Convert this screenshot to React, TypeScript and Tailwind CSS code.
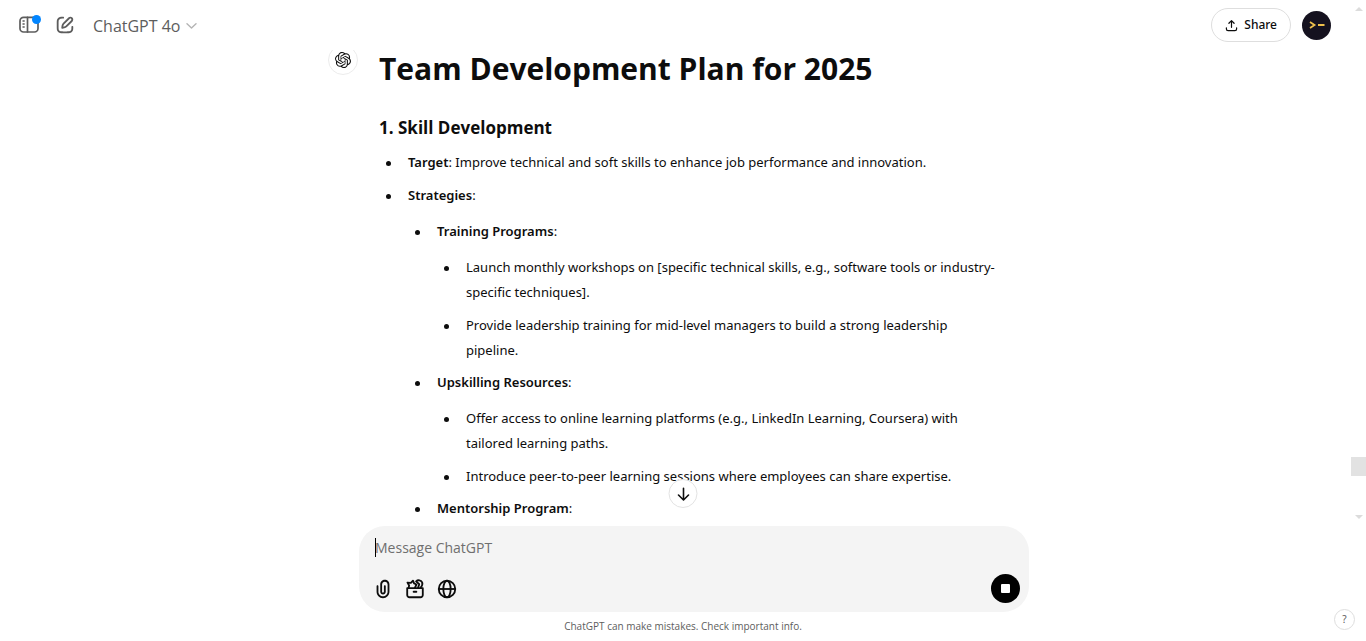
import React from "react";

type Item = { text?: string; bold?: string; tail?: string; children?: Item[] };

const plan: Item[] = [
  { bold: "Target", tail: ": Improve technical and soft skills to enhance job performance and innovation." },
  {
    bold: "Strategies",
    tail: ":",
    children: [
      {
        bold: "Training Programs",
        tail: ":",
        children: [
          { text: "Launch monthly workshops on [specific technical skills, e.g., software tools or industry-specific techniques]." },
          { text: "Provide leadership training for mid-level managers to build a strong leadership pipeline." },
        ],
      },
      {
        bold: "Upskilling Resources",
        tail: ":",
        children: [
          { text: "Offer access to online learning platforms (e.g., LinkedIn Learning, Coursera) with tailored learning paths." },
          { text: "Introduce peer-to-peer learning sessions where employees can share expertise." },
        ],
      },
      { bold: "Mentorship Program", tail: ":" },
    ],
  },
];

const listStyles = [
  "mt-2 flex flex-col gap-2",
  "mt-[11px] flex flex-col gap-[7px]",
  "mt-[11px] flex flex-col gap-2",
];

function Bullets({ items, depth = 0 }: { items: Item[]; depth?: number }) {
  return (
    <ul className={listStyles[depth]}>
      {items.map((item, i) => (
        <li key={i} className="relative pl-[29px] before:absolute before:left-[7px] before:top-[11px] before:size-[5px] before:rounded-full before:bg-[#0d0d0d]">
          <p>
            {item.bold && <strong className="font-semibold">{item.bold}</strong>}
            {item.tail}
            {item.text}
          </p>
          {item.children && <Bullets items={item.children} depth={depth + 1} />}
        </li>
      ))}
    </ul>
  );
}

function SidebarIcon() {
  return (
    <svg className="h-5 w-[22px]" viewBox="0 0 22 20" fill="none" stroke="currentColor" strokeWidth="1.7" strokeLinecap="round">
      <rect x="2" y="2.4" width="18" height="14.6" rx="3.6" />
      <path d="M9.500 2.400v14.600" />
      <path d="M5 6h1.200M5 9h1.200M5 12h1.200" strokeWidth="1.400" />
    </svg>
  );
}

function EditIcon() {
  return (
    <svg className="size-[22px]" viewBox="0 0 24 24" fill="currentColor" fillRule="evenodd">
      <path d="M15.6729 3.91287C16.8918 2.69392 18.8682 2.69392 20.0871 3.91287C21.3061 5.13182 21.3061 7.10813 20.0871 8.32708L14.1499 14.2643C13.3849 15.0293 12.3925 15.5255 11.3215 15.6785L9.14142 15.9899C8.82983 16.0344 8.51546 15.9297 8.29289 15.7071C8.07033 15.4845 7.96554 15.1701 8.01005 14.8586L8.32149 12.6785C8.47449 11.6075 8.97072 10.615 9.7357 9.85006L15.6729 3.91287ZM18.6729 5.32708C18.235 4.88918 17.525 4.88918 17.0871 5.32708L11.1499 11.2643C10.6909 11.7233 10.3932 12.3187 10.3014 12.9613L10.1785 13.8215L11.0386 13.6986C11.6812 13.6068 12.2767 13.3091 12.7357 12.8501L18.6729 6.91287C19.1108 6.47497 19.1108 5.76499 18.6729 5.32708ZM11 3.99929C11.0004 4.55157 10.5531 4.99963 10.0008 5.00007C9.00227 5.00084 8.29769 5.00827 7.74651 5.06064C7.20685 5.11191 6.88488 5.20117 6.63803 5.32695C6.07354 5.61457 5.6146 6.07351 5.32698 6.63799C5.19279 6.90135 5.10062 7.24904 5.05118 7.8542C5.00078 8.47105 5 9.26336 5 10.4V13.6C5 14.7366 5.00078 15.5289 5.05118 16.1457C5.10062 16.7509 5.19279 17.0986 5.32698 17.3619C5.6146 17.9264 6.07354 18.3854 6.63803 18.673C6.90138 18.8072 7.24907 18.8993 7.85424 18.9488C8.47108 18.9992 9.26339 19 10.4 19H13.6C14.7366 19 15.5289 18.9992 16.1458 18.9488C16.7509 18.8993 17.0986 18.8072 17.362 18.673C17.9265 18.3854 18.3854 17.9264 18.673 17.3619C18.7988 17.1151 18.8881 16.7931 18.9393 16.2535C18.9917 15.7023 18.9991 14.9977 18.9999 13.9992C19.0003 13.4469 19.4484 12.9995 20.0007 13C20.553 13.0004 21.0003 13.4485 20.9999 14.0007C20.9991 14.9789 20.9932 15.7808 20.9304 16.4426C20.8664 17.116 20.7385 17.7136 20.455 18.2699C19.9757 19.2107 19.2108 19.9756 18.27 20.455C17.6777 20.7568 17.0375 20.8826 16.3086 20.9421C15.6008 21 14.7266 21 13.6428 21H10.3572C9.27339 21 8.39925 21 7.69138 20.9421C6.96253 20.8826 6.32234 20.7568 5.73005 20.455C4.78924 19.9756 4.02433 19.2107 3.54497 18.2699C3.24318 17.6776 3.11737 17.0374 3.05782 16.3086C2.99998 15.6007 2.99999 14.7266 3 13.6428V10.3572C2.99999 9.27337 2.99998 8.39922 3.05782 7.69134C3.11737 6.96249 3.24318 6.3223 3.54497 5.73001C4.02433 4.7892 4.78924 4.0243 5.73005 3.54493C6.28633 3.26149 6.88399 3.13358 7.55735 3.06961C8.21919 3.00673 9.02103 3.00083 9.99922 3.00007C10.5515 2.99964 10.9996 3.447 11 3.99929Z" />
    </svg>
  );
}

function OpenAiLogo() {
  return (
    <svg className="size-4" viewBox="0 0 24 24" fill="currentColor">
      <path d="M22.2819 9.8211a5.9847 5.9847 0 0 0-.5157-4.9108 6.0462 6.0462 0 0 0-6.5098-2.9A6.0651 6.0651 0 0 0 4.9807 4.1818a5.9847 5.9847 0 0 0-3.9977 2.9 6.0462 6.0462 0 0 0 .7427 7.0966 5.98 5.98 0 0 0 .511 4.9107 6.051 6.051 0 0 0 6.5146 2.9001A5.9847 5.9847 0 0 0 13.2599 24a6.0557 6.0557 0 0 0 5.7718-4.2058 5.9894 5.9894 0 0 0 3.9977-2.9001 6.0557 6.0557 0 0 0-.7475-7.0729zm-9.022 12.6081a4.4755 4.4755 0 0 1-2.8764-1.0408l.1419-.0804 4.7783-2.7582a.7948.7948 0 0 0 .3927-.6813v-6.7369l2.02 1.1686a.071.071 0 0 1 .038.052v5.5826a4.504 4.504 0 0 1-4.4945 4.4944zm-9.6607-4.1254a4.4708 4.4708 0 0 1-.5346-3.0137l.142.0852 4.783 2.7582a.7712.7712 0 0 0 .7806 0l5.8428-3.3685v2.3324a.0804.0804 0 0 1-.0332.0615L9.74 19.9502a4.4992 4.4992 0 0 1-6.1408-1.6464zM2.3408 7.8956a4.485 4.485 0 0 1 2.3655-1.9728V11.6a.7664.7664 0 0 0 .3879.6765l5.8144 3.3543-2.0201 1.1685a.0757.0757 0 0 1-.071 0l-4.8303-2.7865A4.504 4.504 0 0 1 2.3408 7.872zm16.5963 3.8558L13.1038 8.364 15.1192 7.2a.0757.0757 0 0 1 .071 0l4.8303 2.7913a4.4944 4.4944 0 0 1-.6765 8.1042v-5.6772a.79.79 0 0 0-.407-.667zm2.0107-3.0231l-.142-.0852-4.7735-2.7818a.7759.7759 0 0 0-.7854 0L9.409 9.2297V6.8974a.0662.0662 0 0 1 .0284-.0615l4.8303-2.7866a4.4992 4.4992 0 0 1 6.6802 4.66zM8.3065 12.863l-2.02-1.1638a.0804.0804 0 0 1-.038-.0567V6.0742a4.4992 4.4992 0 0 1 7.3757-3.4537l-.142.0805L8.704 5.459a.7948.7948 0 0 0-.3927.6813zm1.0976-2.3654l2.602-1.4998 2.6069 1.4998v2.9994l-2.5974 1.4997-2.6067-1.4997Z" />
    </svg>
  );
}

function ClipIcon() {
  return (
    <svg className="size-[22px]" viewBox="0 0 24 24" fill="currentColor" fillRule="evenodd">
      <path d="M9 7C9 4.23858 11.2386 2 14 2C16.7614 2 19 4.23858 19 7V15C19 18.866 15.866 22 12 22C8.13401 22 5 18.866 5 15V9C5 8.44772 5.44772 8 6 8C6.55228 8 7 8.44772 7 9V15C7 17.7614 9.23858 20 12 20C14.7614 20 17 17.7614 17 15V7C17 5.34315 15.6569 4 14 4C12.3431 4 11 5.34315 11 7V15C11 15.5523 11.4477 16 12 16C12.5523 16 13 15.5523 13 15V9C13 8.44772 13.4477 8 14 8C14.5523 8 15 8.44772 15 9V15C15 16.6569 13.6569 18 12 18C10.3431 18 9 16.6569 9 15V7Z" />
    </svg>
  );
}

function ToolboxIcon() {
  return (
    <svg className="size-[22px]" viewBox="0 0 24 24" fill="none" stroke="currentColor" strokeWidth="2" strokeLinejoin="round" strokeLinecap="round">
      <path d="M3.500 11h17v7.500a2.500 2.500 0 0 1-2.500 2.500H6a2.500 2.500 0 0 1-2.500-2.500z" />
      <path d="M10.500 15h3" />
      <path d="M5 11L5.600 8.200 3.800 5l3.700.3L9.800 2.900l1.200 3 2.600 1.200-1.600 3.400" />
      <path d="M13.200 3.600a4.200 4.200 0 0 1 6.600 1.200c.9 2.400-.2 4-1.600 5.700M15.400 10.500l1.200-3.700-3.400-3.200" />
    </svg>
  );
}

function GlobeIcon() {
  return (
    <svg className="size-[22px]" viewBox="0 0 24 24" fill="none" stroke="currentColor" strokeWidth="2">
      <circle cx="12" cy="12" r="9" />
      <ellipse cx="12" cy="12" rx="4" ry="9" />
      <path d="M3 12h18" />
    </svg>
  );
}

export default function App() {
  return (
    <div className="relative flex h-screen flex-col overflow-hidden bg-white font-['Noto_Sans','Open_Sans',sans-serif] text-[#0d0d0d]">
      <header className="relative z-10 -mb-[2px] flex h-[50px] shrink-0 items-center bg-white pl-[18px] pr-[35px] text-[#5d5d5d]">
        <button aria-label="Open sidebar" className="relative flex h-9 items-center">
          <SidebarIcon />
          <span className="absolute -right-px top-[8px] size-[9px] rounded-full bg-[#0285ff]" />
        </button>
        <button aria-label="New chat" className="ml-[14px] flex h-9 items-center">
          <EditIcon />
        </button>
        <button className="ml-[17px] flex items-center gap-[6px] pt-[2px] font-['Open_Sans',sans-serif] text-[16px] font-medium">
          ChatGPT 4o
          <svg className="h-[6px] w-[11px] text-[#b4b4b4]" viewBox="0 0 11 6" fill="none" stroke="currentColor" strokeWidth="1.4" strokeLinecap="round" strokeLinejoin="round">
            <path d="M1 .8l4.500 4.200L10 .8" />
          </svg>
        </button>
        <button className="ml-auto flex h-[34px] items-center gap-[6px] rounded-full border border-[#dedede] px-[13px] text-[12px] font-medium text-[#0d0d0d]">
          <svg className="size-[13px]" viewBox="0 0 14 14" fill="none" stroke="currentColor" strokeWidth="1.300" strokeLinecap="round" strokeLinejoin="round">
            <path d="M7 9V2M4.200 4.600L7 1.800l2.800 2.800M1.500 9.500v1.200A1.800 1.800 0 0 0 3.300 12.500h7.400a1.800 1.800 0 0 0 1.800-1.800V9.500" />
          </svg>
          Share
        </button>
        <button aria-label="Account" className="ml-[11px] flex size-[29px] items-center justify-center rounded-full bg-[#15121f]">
          <svg className="h-2 w-4" viewBox="0 0 16 8" fill="none" stroke="#eec04c" strokeWidth="1.800">
            <path d="M1 1l4.500 3L1 7M9 4H15.500" />
          </svg>
        </button>
      </header>

      <main className="flex min-h-0 flex-1 justify-center overflow-hidden">
        <div className="flex w-[710px] gap-[21px]">
          <div className="-mt-[3px] flex size-[30px] shrink-0 items-center justify-center rounded-full border border-[#ececec]">
            <OpenAiLogo />
          </div>
          <article className="w-[621px] text-[13px] leading-[25px]">
            <h1 className="font-['Open_Sans',sans-serif] text-[30px] font-bold leading-[42px]">Team Development Plan for 2025</h1>
            <h2 className="mt-6 font-['Open_Sans',sans-serif] text-[17px] font-bold leading-[28px]">1. Skill Development</h2>
            <Bullets items={plan} />
          </article>
        </div>
      </main>

      <footer className="relative z-10 flex shrink-0 flex-col items-center bg-white">
        <button aria-label="Scroll to bottom" className="absolute -top-[47px] left-1/2 flex size-[29px] -translate-x-1/2 items-center justify-center rounded-full border border-[#e3e3e3] bg-white">
          <svg className="size-[14px]" viewBox="0 0 14 14" fill="none" stroke="currentColor" strokeWidth="1.600" strokeLinecap="round" strokeLinejoin="round">
            <path d="M7 1.200v11.600M2 8l5 5 5-5" />
          </svg>
        </button>
        <form className="ml-[22px] flex h-[86px] w-[670px] flex-col justify-between rounded-[26px] bg-[#f4f4f4] pb-[9px] pl-4 pr-[9px] pt-[9px]" onSubmit={(e) => e.preventDefault()}>
          <div className="relative">
            <input aria-label="Message ChatGPT" placeholder="Message ChatGPT" className="h-[25px] w-full bg-transparent font-['Open_Sans',sans-serif] text-[14px] outline-none placeholder:text-[#6f6f6f]" />
            <span className="absolute left-0 top-[3px] h-[19px] w-px bg-black" />
          </div>
          <div className="flex items-center gap-[10px]">
            <button type="button" aria-label="Attach file" className="-ml-[3px]"><ClipIcon /></button>
            <button type="button" aria-label="Tools"><ToolboxIcon /></button>
            <button type="button" aria-label="Search the web"><GlobeIcon /></button>
            <button type="button" aria-label="Stop" className="ml-auto flex size-[29px] items-center justify-center rounded-full bg-black">
              <span className="size-[9px] rounded-[1px] bg-white" />
            </button>
          </div>
        </form>
        <p className="py-[6px] font-['Open_Sans',sans-serif] text-[10px] leading-[17px] text-[#5d5d5d]">ChatGPT can make mistakes. Check important info.</p>
        <button aria-label="Help" className="absolute bottom-[11px] right-[11px] flex size-[21px] items-center justify-center rounded-full border border-[#dedede] text-[10px] text-[#5d5d5d]">?</button>
      </footer>

      <div className="absolute right-0 top-0 z-20 flex h-[526px] w-[15px] flex-col items-center py-[7px]">
        <span className="border-x-4 border-b-4 border-x-transparent border-b-[#dcdcdc]" />
        <span className="mb-[39px] mt-auto h-[19px] w-full bg-[#e2e2e2]" />
        <span className="border-x-4 border-t-4 border-x-transparent border-t-[#dcdcdc]" />
      </div>
    </div>
  );
}
